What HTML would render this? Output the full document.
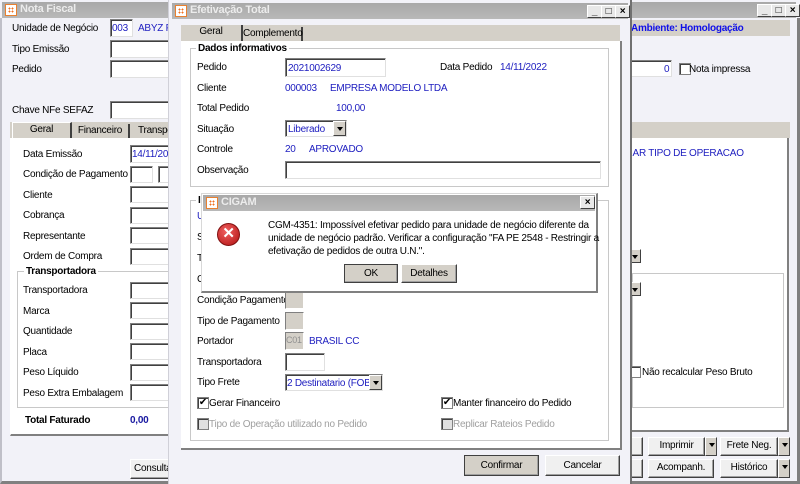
<!DOCTYPE html>
<html><head><meta charset="utf-8"><style>
*{box-sizing:border-box;margin:0;padding:0}
body{width:800px;height:484px;overflow:hidden;position:relative;background:#f2f2f8;font-family:"Liberation Sans",sans-serif;font-size:10px;letter-spacing:-0.25px;color:#000}
.a{position:absolute;white-space:nowrap}
.t{position:absolute;white-space:nowrap;line-height:13px}
.b{color:#2020c0}
.in{position:absolute;background:#fff;border:1px solid #808080;border-right-color:#e0e0e0;border-bottom-color:#e0e0e0;box-shadow:inset 1px 1px 0 #404040}
.gr{position:absolute;background:#d4d0c8;border:1px solid #808080;border-right-color:#fff;border-bottom-color:#fff}
.btn{position:absolute;background:#f0f0f0;border:1px solid #fff;border-right-color:#404040;border-bottom-color:#404040;box-shadow:inset -1px -1px 0 #a0a0a0;text-align:center;line-height:16px}
.title{position:absolute;height:16px;background:linear-gradient(#a8a8a8,#b8b8b8);color:#e8e8e8;font-weight:bold;font-size:11px;line-height:16px}
.ico{position:absolute;width:12px;height:12px;background:#fff;border:1px solid #e88030}
.ico:after{content:"";position:absolute;left:2px;top:2px;width:6px;height:6px;background:radial-gradient(#f07020 40%,transparent 45%) 0 0/3px 3px}
.wb{position:absolute;width:15px;height:13px;background:#e8e8e8;border:1px solid #fff;border-right-color:#404040;border-bottom-color:#404040;font-size:10px;line-height:11px;text-align:center;font-weight:bold}
.cb{position:absolute;width:12px;height:12px;background:#fff;border:1px solid #808080;box-shadow:inset 1px 1px 0 #404040;font-size:10px;line-height:10px;text-align:center}
.dd{position:absolute;width:13px;background:#d4d0c8;border:1px solid #fff;border-right-color:#404040;border-bottom-color:#404040}
.dd:after{content:"";position:absolute;left:3px;top:5px;border:3px solid transparent;border-top:4px solid #000}
.grp{position:absolute;border:1px solid #c8c8c8;box-shadow:1px 1px 0 #fff}
.gl{position:absolute;background:#fff;font-weight:bold;padding:0 2px;line-height:13px}
</style></head><body>

<div class="title" style="left:2px;top:2px;width:794px"></div>
<div class="ico" style="left:5px;top:4px"></div>
<div class="a" style="left:20px;top:3px;font-weight:bold;font-size:11px;color:#ececec">Nota Fiscal</div>
<div class="wb" style="left:757px;top:4px">_</div><div class="wb" style="left:771px;top:4px">□</div><div class="wb" style="left:785px;top:4px">×</div>
<div class="a" style="left:0;top:18px;width:800px;height:466px;border-left:2px solid #c0c0c8;border-right:3px solid #808080;border-bottom:3px solid #808080"></div>

<div class="t" style="left:12px;top:22px">Unidade de Negócio</div>
<div class="in" style="left:110px;top:19px;width:23px;height:18px"></div><div class="t b" style="left:112px;top:22px">003</div>
<div class="t b" style="left:138px;top:22px">ABYZ PA</div>
<div class="t" style="left:12px;top:43px">Tipo Emissão</div><div class="in" style="left:110px;top:40px;width:70px;height:18px"></div>
<div class="t" style="left:12px;top:63px">Pedido</div><div class="in" style="left:110px;top:60px;width:70px;height:18px"></div>
<div class="t" style="left:12px;top:104px">Chave NFe SEFAZ</div><div class="in" style="left:110px;top:101px;width:70px;height:18px"></div>
<div class="a" style="left:10px;top:122px;width:165px;height:16px;background:#d4d0c8"></div>
<div class="a" style="left:12px;top:122px;width:60px;height:18px;background:#d4d0c8;border:1px solid #fff;border-right:2px solid #404040;text-align:center;line-height:14px">Geral</div>
<div class="a" style="left:72px;top:124px;width:58px;height:14px;border-right:2px solid #404040;text-align:center;line-height:14px">Financeiro</div>
<div class="a" style="left:138px;top:124px;line-height:14px">Transpo</div>
<div class="a" style="left:10px;top:138px;width:170px;height:298px;background:#fff;border-left:1px solid #fff;border-bottom:2px solid #808080"></div>
<div class="t" style="left:23px;top:148px">Data Emissão</div><div class="in" style="left:130px;top:145px;width:50px;height:18px"></div><div class="t b" style="left:132px;top:148px">14/11/20</div>
<div class="t" style="left:23px;top:168px">Condição de Pagamento</div><div class="in" style="left:130px;top:166px;width:23px;height:17px"></div><div class="in" style="left:158px;top:166px;width:22px;height:17px"></div>
<div class="t" style="left:23px;top:189px">Cliente</div><div class="in" style="left:130px;top:186px;width:50px;height:17px"></div>
<div class="t" style="left:23px;top:209px">Cobrança</div><div class="in" style="left:130px;top:207px;width:50px;height:17px"></div>
<div class="t" style="left:23px;top:230px">Representante</div><div class="in" style="left:130px;top:227px;width:50px;height:17px"></div>
<div class="t" style="left:23px;top:250px">Ordem de Compra</div><div class="in" style="left:130px;top:248px;width:50px;height:17px"></div>
<div class="grp" style="left:17px;top:271px;width:170px;height:137px"></div><div class="gl" style="left:24px;top:265px">Transportadora</div>
<div class="t" style="left:23px;top:284px">Transportadora</div><div class="in" style="left:130px;top:282px;width:50px;height:17px"></div>
<div class="t" style="left:23px;top:305px">Marca</div><div class="in" style="left:130px;top:302px;width:50px;height:17px"></div>
<div class="t" style="left:23px;top:325px">Quantidade</div><div class="in" style="left:130px;top:323px;width:50px;height:17px"></div>
<div class="t" style="left:23px;top:346px">Placa</div><div class="in" style="left:130px;top:343px;width:50px;height:17px"></div>
<div class="t" style="left:23px;top:366px">Peso Líquido</div><div class="in" style="left:130px;top:364px;width:50px;height:17px"></div>
<div class="t" style="left:23px;top:387px">Peso Extra Embalagem</div><div class="in" style="left:130px;top:384px;width:50px;height:17px"></div>
<div class="t" style="left:25px;top:414px;font-weight:bold">Total Faturado</div><div class="t" style="left:130px;top:414px;font-weight:bold;color:#1818a0">0,00</div>
<div class="btn" style="left:130px;top:459px;width:50px;height:20px;text-align:left;padding-left:3px;line-height:18px">Consulta</div>

<div class="a" style="left:630px;top:20px;width:160px;height:16px;background:#d4d0c8"></div>
<div class="t" style="left:631px;top:22px;font-weight:bold;color:#1010e8">Ambiente: Homologação</div>
<div class="in" style="left:620px;top:60px;width:52px;height:17px"></div><div class="t b" style="left:664px;top:63px">0</div>
<div class="cb" style="left:679px;top:63px"></div><div class="t" style="left:689px;top:63px">Nota impressa</div>
<div class="a" style="left:630px;top:122px;width:160px;height:16px;background:#d4d0c8"></div>
<div class="a" style="left:630px;top:138px;width:159px;height:294px;background:#fff;border-right:2px solid #808080;border-bottom:2px solid #808080"></div>
<div class="t b" style="left:630px;top:147px">IAR TIPO DE OPERACAO</div>
<div class="dd" style="left:628px;top:249px;height:14px"></div>
<div class="a" style="left:632px;top:273px;width:152px;height:135px;border:1px solid #c8c8c8"></div>
<div class="dd" style="left:628px;top:282px;height:14px"></div>
<div class="cb" style="left:629px;top:366px"></div><div class="t" style="left:642px;top:366px">Não recalcular Peso Bruto</div>
<div class="btn" style="left:631px;top:437px;width:12px;height:19px"></div>
<div class="btn" style="left:648px;top:437px;width:57px;height:19px">Imprimir</div><div class="dd" style="left:705px;top:437px;height:19px;width:12px"></div>
<div class="btn" style="left:720px;top:437px;width:58px;height:19px">Frete Neg.</div><div class="dd" style="left:778px;top:437px;height:19px;width:12px"></div>
<div class="btn" style="left:631px;top:459px;width:12px;height:19px"></div>
<div class="btn" style="left:648px;top:459px;width:66px;height:19px">Acompanh.</div>
<div class="btn" style="left:720px;top:459px;width:58px;height:19px">Histórico</div><div class="dd" style="left:778px;top:459px;height:19px;width:12px"></div>

<div class="a" style="left:168px;top:0;width:464px;height:484px;background:#f2f2f8;border-left:1px solid #d0d0d8;border-right:2px solid #707070"></div>
<div class="title" style="left:172px;top:3px;width:456px"></div>
<div class="ico" style="left:175px;top:5px"></div>
<div class="a" style="left:190px;top:4px;font-weight:bold;font-size:11px;color:#ececec">Efetivação Total</div>
<div class="wb" style="left:587px;top:5px">_</div><div class="wb" style="left:601px;top:5px">□</div><div class="wb" style="left:615px;top:5px">×</div>
<div class="a" style="left:181px;top:25px;width:439px;height:16px;background:#d4d0c8"></div>
<div class="a" style="left:181px;top:25px;width:62px;height:16px;background:#d4d0c8;border-right:2px solid #404040;text-align:center;line-height:14px">Geral</div>
<div class="a" style="left:243px;top:27px;width:60px;height:14px;border-right:2px solid #404040;text-align:center;line-height:14px">Complemento</div>
<div class="a" style="left:181px;top:41px;width:441px;height:409px;background:#fff;border-right:2px solid #808080;border-bottom:2px solid #808080"></div>
<div class="grp" style="left:190px;top:48px;width:419px;height:139px"></div><div class="gl" style="left:196px;top:42px">Dados informativos</div>
<div class="t" style="left:197px;top:61px">Pedido</div><div class="in" style="left:285px;top:58px;width:101px;height:19px"></div><div class="t b" style="left:288px;top:62px">2021002629</div>
<div class="t" style="left:440px;top:61px">Data Pedido</div><div class="t b" style="left:500px;top:61px">14/11/2022</div>
<div class="t" style="left:197px;top:82px">Cliente</div><div class="t b" style="left:285px;top:82px">000003</div><div class="t b" style="left:330px;top:82px">EMPRESA MODELO LTDA</div>
<div class="t" style="left:197px;top:102px">Total Pedido</div><div class="t b" style="left:336px;top:102px">100,00</div>
<div class="t" style="left:197px;top:123px">Situação</div><div class="in" style="left:285px;top:120px;width:62px;height:17px"></div><div class="t b" style="left:288px;top:123px">Liberado</div><div class="dd" style="left:333px;top:121px;height:15px"></div>
<div class="t" style="left:197px;top:143px">Controle</div><div class="t b" style="left:285px;top:143px">20</div><div class="t b" style="left:309px;top:143px">APROVADO</div>
<div class="t" style="left:197px;top:164px">Observação</div><div class="in" style="left:285px;top:161px;width:316px;height:18px"></div>
<div class="grp" style="left:190px;top:200px;width:419px;height:241px"></div><div class="gl" style="left:196px;top:194px">I</div>
<div class="t b" style="left:197px;top:210px">U</div><div class="t" style="left:197px;top:231px">S</div><div class="t" style="left:197px;top:252px">T</div><div class="t" style="left:197px;top:273px">C</div>
<div class="t" style="left:197px;top:294px">Condição Pagamento</div><div class="gr" style="left:285px;top:291px;width:19px;height:18px"></div>
<div class="t" style="left:197px;top:315px">Tipo de Pagamento</div><div class="gr" style="left:285px;top:312px;width:19px;height:18px"></div>
<div class="t" style="left:197px;top:335px">Portador</div><div class="gr" style="left:285px;top:332px;width:19px;height:18px;color:#909090;line-height:15px;font-size:9px">C01</div><div class="t b" style="left:309px;top:335px">BRASIL CC</div>
<div class="t" style="left:197px;top:356px">Transportadora</div><div class="in" style="left:285px;top:353px;width:40px;height:18px"></div>
<div class="t" style="left:197px;top:376px">Tipo Frete</div><div class="in" style="left:285px;top:374px;width:98px;height:17px"></div><div class="t b" style="left:287px;top:377px">2 Destinatario (FOB)</div><div class="dd" style="left:369px;top:375px;height:15px"></div>
<div class="cb" style="left:197px;top:397px">✔</div><div class="t" style="left:209px;top:397px">Gerar Financeiro</div>
<div class="cb" style="left:441px;top:397px">✔</div><div class="t" style="left:453px;top:397px">Manter financeiro do Pedido</div>
<div class="cb" style="left:197px;top:418px;background:#e0e0e0"></div><div class="t" style="left:209px;top:418px;color:#a0a0a0">Tipo de Operação utilizado no Pedido</div>
<div class="cb" style="left:441px;top:418px;background:#e0e0e0"></div><div class="t" style="left:453px;top:418px;color:#a0a0a0">Replicar Rateios Pedido</div>
<div class="btn" style="left:464px;top:455px;width:75px;height:21px;background:#d4d0c8;line-height:19px;border:1px solid #404040">Confirmar</div>
<div class="btn" style="left:545px;top:455px;width:75px;height:21px;line-height:19px">Cancelar</div>

<div class="a" style="left:201px;top:193px;width:397px;height:100px;background:#fff;border:1px solid #d8d8d8;border-right:2px solid #808080;border-bottom:2px solid #808080"></div>
<div class="title" style="left:203px;top:195px;width:392px"></div>
<div class="ico" style="left:206px;top:197px"></div>
<div class="a" style="left:221px;top:196px;font-weight:bold;font-size:11px;color:#ececec">CIGAM</div>
<div class="wb" style="left:580px;top:196px">×</div>
<div class="a" style="left:217px;top:223px;width:23px;height:23px;border-radius:50%;background:radial-gradient(circle at 40% 35%,#f06060,#b01010);border:1px solid #801010;color:#fff;font-weight:bold;font-size:15px;line-height:20px;text-align:center">✕</div>
<div class="t" style="left:268px;top:219px;line-height:13px">CGM-4351: Impossível efetivar pedido para unidade de negócio diferente da<br>unidade de negócio padrão. Verificar a configuração "FA PE 2548 - Restringir a<br>efetivação de pedidos de outra U.N.".</div>
<div class="btn" style="left:344px;top:264px;width:54px;height:19px;background:#d4d0c8;border:1px solid #404040;line-height:17px">OK</div>
<div class="btn" style="left:401px;top:264px;width:56px;height:19px;background:#d4d0c8;line-height:17px">Detalhes</div>
</body></html>
